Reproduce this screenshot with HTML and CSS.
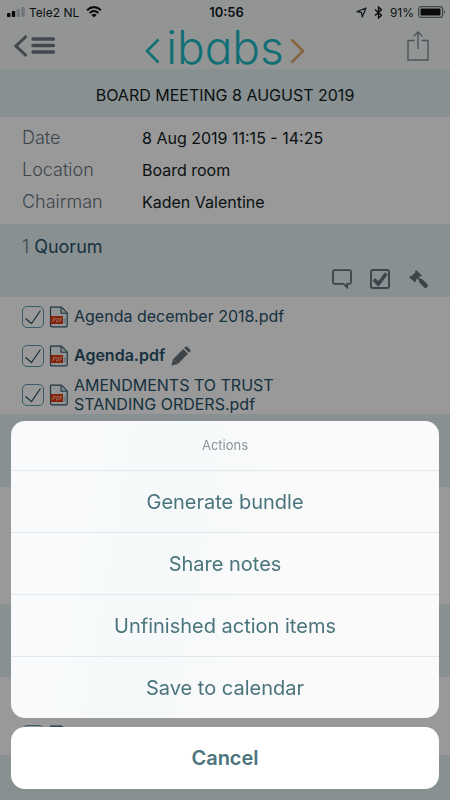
FILE: index.html
```html
<!DOCTYPE html>
<html lang="en">
<head>
<meta charset="utf-8">
<meta name="viewport" content="width=device-width, initial-scale=1">
<title>iBabs</title>
<link rel="stylesheet" href="styles.css">
</head>
<body>
<svg class="defs" aria-hidden="true">
  <symbol id="pdf" viewBox="0 0 20 22">
    <path d="M2 1.2H12.5L18.2 7V19.5Q18.2 20.8 17 20.8H3Q1.5 20.8 1.5 19.5V2Q1.5 1.2 2 1.2Z" fill="#f4f8fa" stroke="#33596c" stroke-width="1.2"/>
    <path d="M12 1.5V7.3H18" fill="#d5e3e8" stroke="#33596c" stroke-width="1.1"/>
    <path d="M14.500 12.500H17.5V17.5H14.500Z" fill="#b9d3dc"/>
    <rect x="1.500" y="10" width="12.500" height="8" fill="#df3410"/>
    <path d="M3.500 16.200 4.500 12H6Q7.100 12.200 6.500 13.600Q6 14.400 4.100 14.200M7.500 16.200 8.200 12Q10.500 12 9.800 14.500Q9.300 16.200 7.500 16.200M10.800 16.200 11.500 12H13.200M11.200 14H12.700" fill="none" stroke="#ffb184" stroke-width="1"/>
  </symbol>
</svg>

<div class="app">
  <header class="top">
    <div class="status">
      <div class="status-side">
        <svg width="18" height="11" viewBox="0 0 18 11"><rect x="0" y="6" width="3.400" height="4" rx=".8" fill="#111"/><rect x="4.800" y="4" width="3.400" height="6" rx=".8" fill="#111"/><rect x="9.600" y="2" width="3.400" height="8" rx=".8" fill="#bcc5c9"/><rect x="14.400" y="0" width="3.400" height="10" rx=".8" fill="#bcc5c9"/></svg>
        <span>Tele2 NL</span>
        <svg class="wifi" width="16" height="12" viewBox="0 0 16 12"><g fill="none" stroke="#111" stroke-width="2"><path d="M1 4.300Q8-2 15 4.300"/><path d="M3.600 7Q8 3 12.400 7"/></g><path d="M8 11.500 5.400 8.900Q8 6.800 10.600 8.900Z" fill="#111"/></svg>
      </div>
      <strong>10:56</strong>
      <div class="status-side status-end">
        <svg width="11" height="11" viewBox="0 0 11 11"><path d="M10 1 6.300 10 5.500 5.500 1 4.700Z" fill="none" stroke="#24323a" stroke-width="1.300" stroke-linejoin="round"/></svg>
        <svg class="bt" width="9" height="13" viewBox="0 0 9 13"><path d="M1 3.500 7.500 9.300 4.500 12V1L7.500 3.700 1 9.500" fill="none" stroke="#111" stroke-width="1.300"/></svg>
        <span>91%</span>
        <svg width="28" height="12" viewBox="0 0 28 12"><rect x=".6" y=".6" width="24" height="10.800" rx="2.500" fill="none" stroke="#65727a" stroke-width="1.200"/><rect x="2.500" y="2.500" width="20" height="7" rx="1" fill="#111"/><path d="M26 4Q28 6 26 8Z" fill="#65727a"/></svg>
      </div>
    </div>
    <nav class="bar">
      <button class="icon-btn" aria-label="Menu">
        <svg width="42" height="26" viewBox="0 0 42 26"><path d="M12.500 2 2 12 12.500 22" fill="none" stroke="#6e7983" stroke-width="3"/><path d="M19 5H39.500M19 11.500H39.500M19 18H39.500" stroke="#6e7983" stroke-width="3.400" stroke-linecap="round"/></svg>
      </button>
      <div class="logo">
        <svg width="15" height="26" viewBox="0 0 15 26"><path d="M13.500 1.500 2 13 13.500 24.500" fill="none" stroke="#1cb9c2" stroke-width="2.600"/></svg>
        <span>ibabs</span>
        <svg width="15" height="26" viewBox="0 0 15 26"><path d="M1.500 1.500 13 13 1.500 24.500" fill="none" stroke="#dfa467" stroke-width="2.600"/></svg>
      </div>
      <button class="icon-btn share" aria-label="Share">
        <svg width="24" height="32" viewBox="0 0 24 32"><path d="M8.500 9.500H2V29H22V9.500H15.500M12 18V1M7.500 5.500 12 1 16.500 5.500" fill="none" stroke="#7f8b95" stroke-width="1.400"/></svg>
      </button>
    </nav>
  </header>

  <h1 class="title">BOARD MEETING 8 AUGUST 2019</h1>

  <dl class="details">
    <dt>Date</dt><dd>8 Aug 2019 11:15 - 14:25</dd>
    <dt>Location</dt><dd>Board room</dd>
    <dt>Chairman</dt><dd>Kaden Valentine</dd>
  </dl>

  <section>
    <div class="item-head">
      <h2><span>1</span> Quorum</h2>
      <div class="tools">
        <button class="icon-btn" aria-label="Comment"><svg width="20" height="20" viewBox="0 0 20 20"><path d="M2.500 1.200H17.500Q19 1.200 19 2.700V13.300Q19 14.800 17.500 14.800H15.200V18.500L11.500 14.800H2.500Q1 14.800 1 13.300V2.700Q1 1.200 2.500 1.200Z" fill="none" stroke="#67727c" stroke-width="1.800"/></svg></button>
        <button class="icon-btn" aria-label="Tasks"><svg width="20" height="20" viewBox="0 0 20 20"><rect x="1" y="1" width="18" height="18" rx="1.500" fill="none" stroke="#67727c" stroke-width="1.900"/><path d="M4 10.300 8.300 15 16.300 4.500" fill="none" stroke="#67727c" stroke-width="3.600"/></svg></button>
        <button class="icon-btn" aria-label="Decisions"><svg width="20" height="20" viewBox="0 0 20 20"><path d="M8.200 1 14 6.800 12.800 7.600 12 7.200 7.700 11.300 8 12.500 6.800 13.300 .8 8 2 7.200 3 7.500 7.300 3.200 7.100 2Z" fill="#67727c"/><path d="M10.300 9 13.300 12" stroke="#67727c" stroke-width="2.400"/><path d="M13.500 12.500 17.500 16.600" stroke="#67727c" stroke-width="4.600" stroke-linecap="round"/></svg></button>
      </div>
    </div>
    <ul class="docs">
      <li><input type="checkbox" id="d1" checked><svg class="file"><use href="#pdf"/></svg><label for="d1">Agenda december 2018.pdf</label></li>
      <li><input type="checkbox" id="d2" checked><svg class="file"><use href="#pdf"/></svg><label for="d2" class="current">Agenda.pdf</label>
        <svg width="20" height="20" viewBox="0 0 20 20"><path d="M.5 19.500 2 13.200 12.200 3 17 7.800 6.800 18Z" fill="#67727c"/><path d="M13.200 2 14.500.8Q15.400 0 16.300.8L19.200 3.700Q20 4.600 19.200 5.500L18 6.800Z" fill="#67727c"/><path d="M2 13.200 6.800 18" stroke="#b5bdc2" stroke-width=".7"/></svg></li>
      <li><input type="checkbox" id="d3" checked><svg class="file"><use href="#pdf"/></svg><label for="d3">AMENDMENTS TO TRUST<br>STANDING ORDERS.pdf</label></li>
    </ul>
  </section>
  <section>
    <div class="item-head"></div>
    <ul class="docs"><li></li><li></li><li></li></ul>
  </section>
  <section>
    <div class="item-head"></div>
    <ul class="docs"><li></li><li><input type="checkbox" aria-label="Document" checked><svg class="file"><use href="#pdf"/></svg></li></ul>
  </section>
</div>

<div class="backdrop">
  <div class="sheet" role="dialog" aria-labelledby="sheet-title">
    <div class="actions">
      <h2 id="sheet-title">Actions</h2>
      <button>Generate bundle</button>
      <button>Share notes</button>
      <button>Unfinished action items</button>
      <button>Save to calendar</button>
    </div>
    <button class="cancel">Cancel</button>
  </div>
</div>
</body>
</html>
```
FILE: styles.css
```css
* { box-sizing: border-box; }

body {
  margin: 0;
  font-family: Inter, "Liberation Sans", sans-serif;
  font-size: 16px;
  color: #111c22;
}

h1, h2, dl, dd, ul { margin: 0; padding: 0; font-weight: 400; }
button { border: 0; padding: 0; background: none; font: inherit; color: inherit; cursor: pointer; }
svg { display: block; flex: none; }
.defs { position: absolute; width: 0; height: 0; }

.app { height: 100vh; overflow: hidden; background: #e4f0f2; }

.top { height: 69px; background: #f5f8f9; }

.status {
  display: grid;
  grid-template-columns: 1fr auto 1fr;
  align-items: center;
  height: 24px;
  padding: 0 4px 0 7px;
  font-size: 12px;
}
.status strong { font-size: 13px; line-height: 16px; font-weight: 600; }
.status-side { display: flex; align-items: center; gap: 4px; }
.status-end { justify-content: flex-end; }
.wifi { margin-left: 3px; }
.bt { margin: 0 3px; }

.bar {
  display: grid;
  grid-template-columns: 1fr auto 1fr;
  align-items: center;
  height: 46px;
  padding: 0 14px;
}
.icon-btn { display: block; }
.bar .icon-btn { justify-self: start; }
.bar .share { justify-self: end; margin-right: 6px; }

.logo { display: flex; align-items: center; }
.logo svg { margin-top: 8px; }
.logo span {
  padding: 0 6px;
  font-size: 46px;
  line-height: 36px;
  font-weight: 300;
  font-feature-settings: "cv11";
  color: #1cb9c2;
}

.title {
  height: 48px;
  padding-top: 2px;
  font-size: 16px;
  line-height: 48px;
  text-align: center;
}

.details {
  display: grid;
  grid-template-columns: 120px 1fr;
  padding: 5px 22px 6px;
  background: #fff;
  line-height: 32px;
}
.details dt { font-size: 18px; font-weight: 300; color: #66757f; }

.item-head {
  display: flex;
  flex-direction: column;
  justify-content: space-between;
  height: 73px;
  padding: 10px 22px 8px;
}
.item-head h2 { font-size: 18px; line-height: 26px; color: #28536a; }
.item-head h2 span { font-weight: 300; color: #66757f; }
.tools { display: flex; justify-content: flex-end; gap: 18px; }

.docs { list-style: none; background: #fff; color: #28536a; }
.docs li {
  display: flex;
  align-items: center;
  height: 39px;
  padding: 0 22px;
  line-height: 19px;
}
.docs input {
  flex: none;
  appearance: none;
  width: 22px;
  height: 22px;
  margin: 0;
  border: 1px solid #5d9dab;
  border-radius: 5px;
}
.docs input:checked {
  background: url("data:image/svg+xml,%3Csvg xmlns='http://www.w3.org/2000/svg' viewBox='0 0 20 20'%3E%3Cpath d='M2.500 11.500 8.500 16.500 17.500 3.500' fill='none' stroke='%2333596c' stroke-width='1.300'/%3E%3C/svg%3E") center / 20px 20px no-repeat;
}
.file { width: 20px; height: 22px; margin: 0 5px; }
.current { margin-right: 6px; font-weight: 600; }

.backdrop {
  position: fixed;
  inset: 0;
  display: flex;
  flex-direction: column;
  justify-content: flex-end;
  padding: 11px;
  background: rgba(0, 0, 0, 0.4);
}
.sheet { display: grid; gap: 9px; font-size: 20px; color: #4b747d; }
.actions {
  display: grid;
  overflow: hidden;
  border-radius: 14px;
  background: linear-gradient(100deg, #f9fafb, #f6f9fa 38%, #fafafa 62%, #fafafa);
}
.actions h2 { font-size: 13px; line-height: 49px; text-align: center; color: #8b9497; }
.actions button { height: 62px; border-top: 1px solid #e4e8ea; }
.cancel { height: 62px; border-radius: 14px; background: #fff; font-weight: 600; }
```
